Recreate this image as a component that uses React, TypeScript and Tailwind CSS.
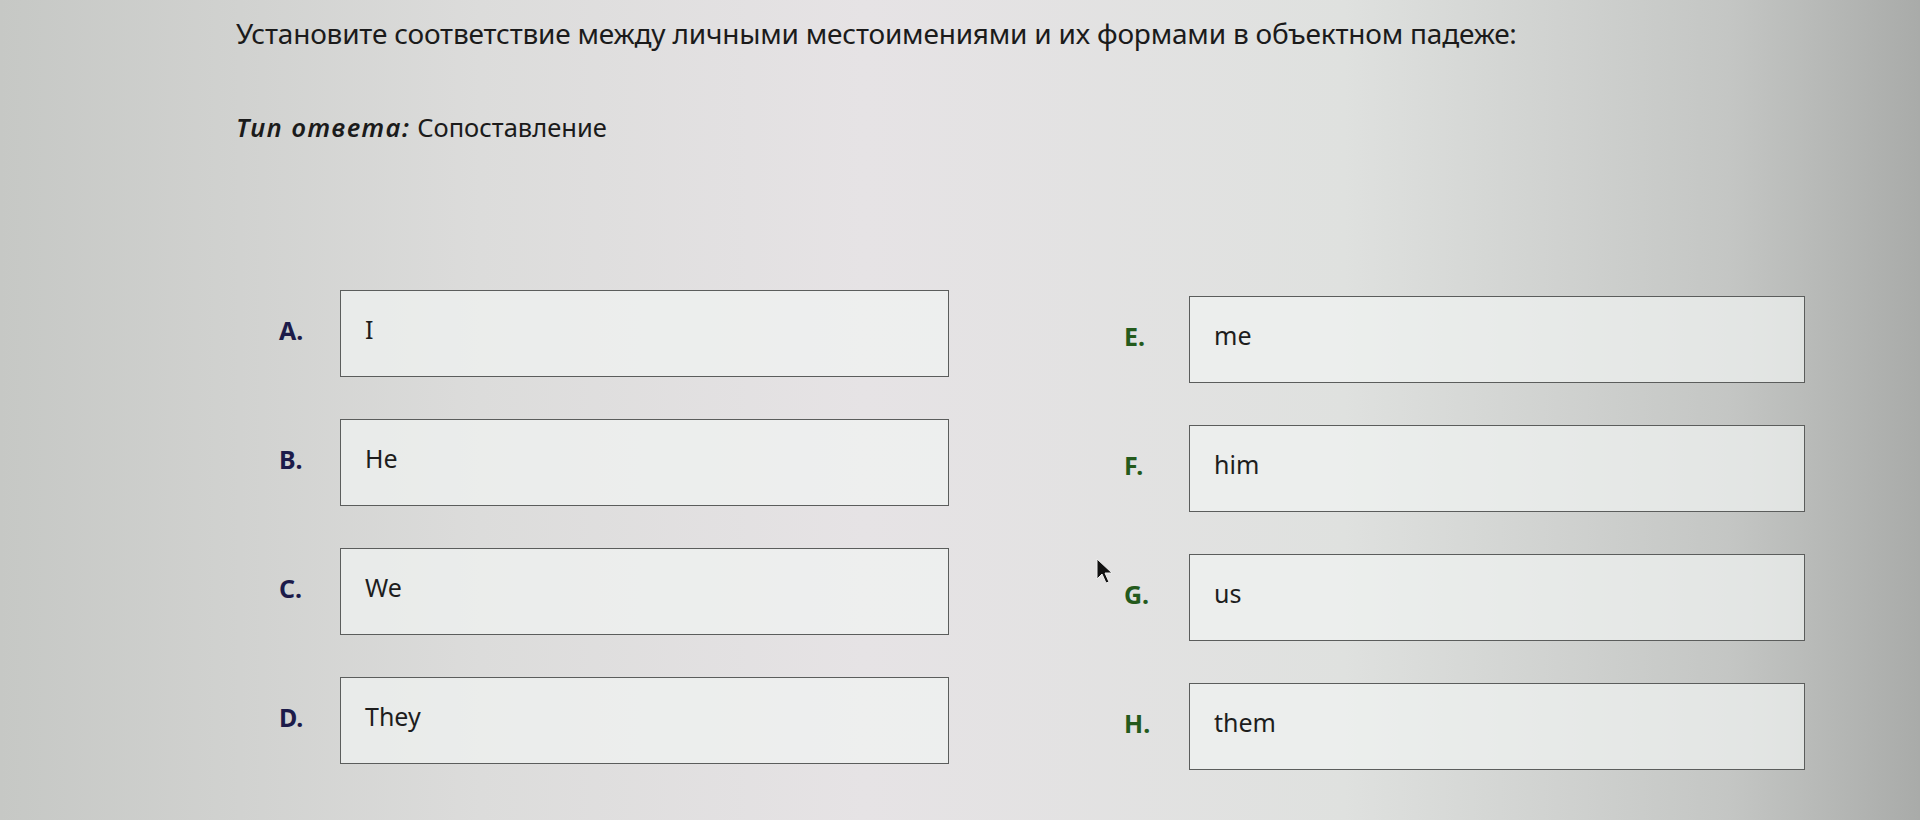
const left = [
  { key: 'A.', text: 'I' },
  { key: 'B.', text: 'He' },
  { key: 'C.', text: 'We' },
  { key: 'D.', text: 'They' },
];

const right = [
  { key: 'E.', text: 'me' },
  { key: 'F.', text: 'him' },
  { key: 'G.', text: 'us' },
  { key: 'H.', text: 'them' },
];

function Row({ label, text, color, labelWidth, boxWidth }: { label: string; text: string; color: string; labelWidth: string; boxWidth: string }) {
  return (
    <div className="flex items-start">
      <div className={`${labelWidth} pt-[24px] text-[25px] font-bold leading-[32px] ${color}`}>{label}</div>
      <div
        className={`${boxWidth} h-[87px] border-[1.5px] border-[#5b5d5c] bg-[#f1f3f2]/70 pl-[24px] pt-[21px] text-[25px] leading-[34px] text-[#1d1d1d]`}
      >
        {text}
      </div>
    </div>
  );
}

export default function App() {
  return (
    <div
      className="relative h-[820px] w-[1920px] overflow-hidden bg-[linear-gradient(90deg,#c6c8c5_0%,#dcdcdb_25%,#e6e3e5_45%,#dfe1df_70%,#c4c6c4_90%,#a9aba9_100%)] text-[#1b1b1b]"
      style={{ fontFamily: '"Noto Sans", "Open Sans", sans-serif' }}
    >
      <div className="pl-[236px] pt-[14px]">
        <h1 className="text-[28px] leading-[38px] font-normal tracking-[-0.2px]">
          Установите соответствие между личными местоимениями и их формами в объектном падеже:
        </h1>
        <p className="mt-[58px] text-[25.5px] leading-[34px]">
          <span className="font-semibold italic tracking-[1.6px]">Тип ответа:</span> Сопоставление
        </p>
      </div>

      <div className="mt-[146px] flex pl-[279px]">
        <div className="flex flex-col gap-[42px]">
          {left.map((r) => (
            <Row key={r.key} label={r.key} text={r.text} color="text-[#1c1b4a]" labelWidth="w-[61px]" boxWidth="w-[609px]" />
          ))}
        </div>
        <div className="ml-[175px] flex flex-col gap-[42px] pt-[6px]">
          {right.map((r) => (
            <Row key={r.key} label={r.key} text={r.text} color="text-[#245a1c]" labelWidth="w-[65px]" boxWidth="w-[616px]" />
          ))}
        </div>
      </div>

      <svg className="absolute left-[1096px] top-[558px]" width="18" height="28" viewBox="0 0 18 28">
        <path d="M1 1 L1 21 L6 16 L10 25 L13 24 L9 15 L16 15 Z" fill="#111" stroke="#eee" strokeWidth="1" />
      </svg>
    </div>
  );
}
